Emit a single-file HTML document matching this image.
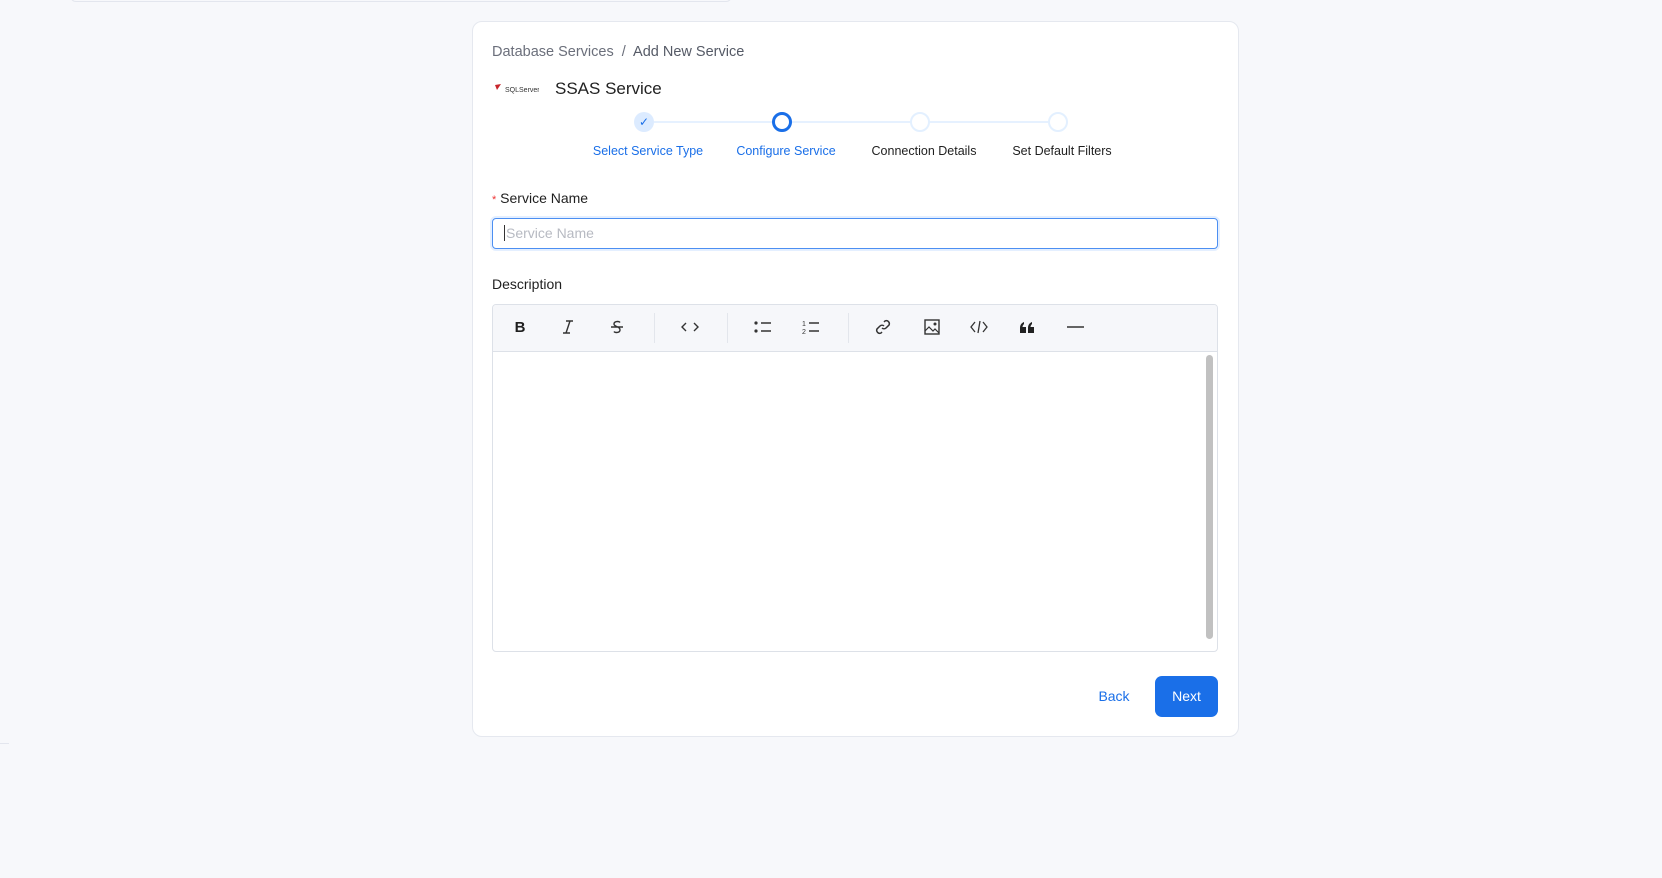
<!DOCTYPE html>
<html><head><style>
*{box-sizing:border-box;margin:0;padding:0}
body{width:1662px;height:878px;background:#f7f8fb;font-family:"Liberation Sans",sans-serif;position:relative;overflow:hidden;color:#1f1f1f}
.a{position:absolute}
.card{left:472px;top:21px;width:767px;height:716px;background:#fff;border:1px solid #e5e8ef;border-radius:10px}
.c{width:20px;height:20px;border-radius:50%;top:112px}
.lbl{top:144px;font-size:12.5px;width:140px;text-align:center}
.ic{top:317px;width:20px;height:20px;display:flex;align-items:center;justify-content:center}
.sep{top:313px;width:1px;height:30px;background:#e3e6ec}
</style></head><body>
<div class="a" style="left:70px;top:-10px;width:662px;height:12px;border:1px solid #e3e6ee;border-radius:6px;background:#f7f8fb"></div>
<div class="a" style="left:0;top:743px;width:9px;height:1px;background:#e3e6ee"></div>
<div class="a card"></div>
<div class="a" style="left:492px;top:44px;font-size:14.5px;color:#6b6f7b">Database Services &nbsp;/&nbsp; <span style="color:#555a66">Add New Service</span></div>
<div class="a" style="left:493px;top:82px;width:46px;height:14px">
<svg width="46" height="14"><path d="M2 3 L8 2 L4 8 Z" fill="#c8262c"/><text x="12" y="10" font-size="7" font-family="Liberation Sans" fill="#333">SQLServer</text></svg></div>
<div class="a" style="left:555px;top:79px;font-size:17px;color:#222">SSAS Service</div>
<div class="a" style="left:654px;top:121px;width:394px;height:2px;background:#e6f1ff"></div>
<div class="a c" style="left:634px;background:#dcebff;color:#1a6fe8;font-size:12px;text-align:center;line-height:20px">✓</div>
<div class="a c" style="left:772px;border:3px solid #1a6fe8;background:#fff"></div>
<div class="a c" style="left:910px;border:2px solid #e3f0ff;background:#fff"></div>
<div class="a c" style="left:1048px;border:2px solid #e3f0ff;background:#fff"></div>
<div class="a lbl" style="left:578px;color:#1a6fe8">Select Service Type</div>
<div class="a lbl" style="left:716px;color:#1a6fe8">Configure Service</div>
<div class="a lbl" style="left:854px">Connection Details</div>
<div class="a lbl" style="left:992px">Set Default Filters</div>
<div class="a" style="left:492px;top:190px;font-size:14px"><span style="color:#e33;font-size:11px">*</span> Service Name</div>
<div class="a" style="left:492px;top:218px;width:726px;height:31px;border:1px solid #4c8ff2;border-radius:4px;box-shadow:0 0 0 2px #e4efff;font-size:14px;color:#b7bac2;padding:6px 11px;line-height:17px"><span style="border-left:1px solid #333;margin-right:1px"></span>Service Name</div>
<div class="a" style="left:492px;top:276px;font-size:14px">Description</div>
<div class="a" style="left:492px;top:304px;width:726px;height:348px;border:1px solid #dde1e8;border-radius:4px;overflow:hidden">
<div style="height:47px;background:#f6f7fa;border-bottom:1px solid #dde1e8"></div></div>
<div class="a" style="left:1206px;top:355px;width:7px;height:284px;background:#c1c1c1;border-radius:4px"></div>
<div class="a ic" style="left:510px;font-weight:bold;font-size:15px">B</div>
<div class="a ic" style="left:558px"><svg width="16" height="16"><path d="M6 2h7M3 14h7M10 2L6 14" stroke="#333" stroke-width="1.4" fill="none"/></svg></div>
<div class="a ic" style="left:607px"><svg width="16" height="16"><path d="M11 3.5C10 2 5 2 5 5c0 3 6 2 6 6 0 3-5 3-6 1.5M2 8h12" stroke="#333" stroke-width="1.4" fill="none"/></svg></div>
<div class="a sep" style="left:654px"></div>
<div class="a ic" style="left:680px"><svg width="18" height="12"><path d="M5 2L1 6l4 4M13 2l4 4-4 4" stroke="#333" stroke-width="1.4" fill="none"/></svg></div>
<div class="a sep" style="left:727px"></div>
<div class="a ic" style="left:753px"><svg width="18" height="14"><circle cx="2" cy="3" r="1.6" fill="#333"/><circle cx="2" cy="11" r="1.6" fill="#333"/><path d="M7 3h10M7 11h10" stroke="#333" stroke-width="1.4"/></svg></div>
<div class="a ic" style="left:801px"><svg width="18" height="16"><text x="0" y="7" font-size="7" fill="#333">1</text><text x="0" y="15" font-size="7" fill="#333">2</text><path d="M7 4h10M7 12h10" stroke="#333" stroke-width="1.4"/></svg></div>
<div class="a sep" style="left:848px"></div>
<div class="a ic" style="left:873px"><svg width="18" height="18"><path d="M8 10a3 3 0 0 0 4 0l3-3a3 3 0 0 0-4-4l-1 1M10 8a3 3 0 0 0-4 0l-3 3a3 3 0 0 0 4 4l1-1" stroke="#333" stroke-width="1.5" fill="none"/></svg></div>
<div class="a ic" style="left:922px"><svg width="16" height="16"><rect x="1" y="1" width="14" height="14" stroke="#333" stroke-width="1.4" fill="none"/><path d="M1 12l4-4 4 4 2-2 4 4" stroke="#333" stroke-width="1.2" fill="none"/><circle cx="11" cy="5" r="1.5" fill="#333"/></svg></div>
<div class="a ic" style="left:969px"><svg width="18" height="14"><path d="M5 2L1 7l4 5M13 2l4 5-4 5M10 1L8 13" stroke="#333" stroke-width="1.3" fill="none"/></svg></div>
<div class="a ic" style="left:1017px"><svg width="16" height="12"><path d="M1 12V7c0-3 1.5-5 4-6v2C4 4 3.5 5 3.5 6H7v6zM9 12V7c0-3 1.5-5 4-6v2c-1 1-1.5 2-1.5 3H15v6z" fill="#222"/></svg></div>
<div class="a ic" style="left:1066px"><svg width="18" height="4"><path d="M0 2h17" stroke="#333" stroke-width="1.6"/></svg></div>
<div class="a" style="left:1094px;top:688px;width:40px;text-align:center;font-size:14px;color:#1a6fe8">Back</div>
<div class="a" style="left:1155px;top:676px;width:63px;height:41px;background:#1a6fe8;border-radius:7px;color:#fff;font-size:14px;text-align:center;line-height:41px">Next</div>
</body></html>
